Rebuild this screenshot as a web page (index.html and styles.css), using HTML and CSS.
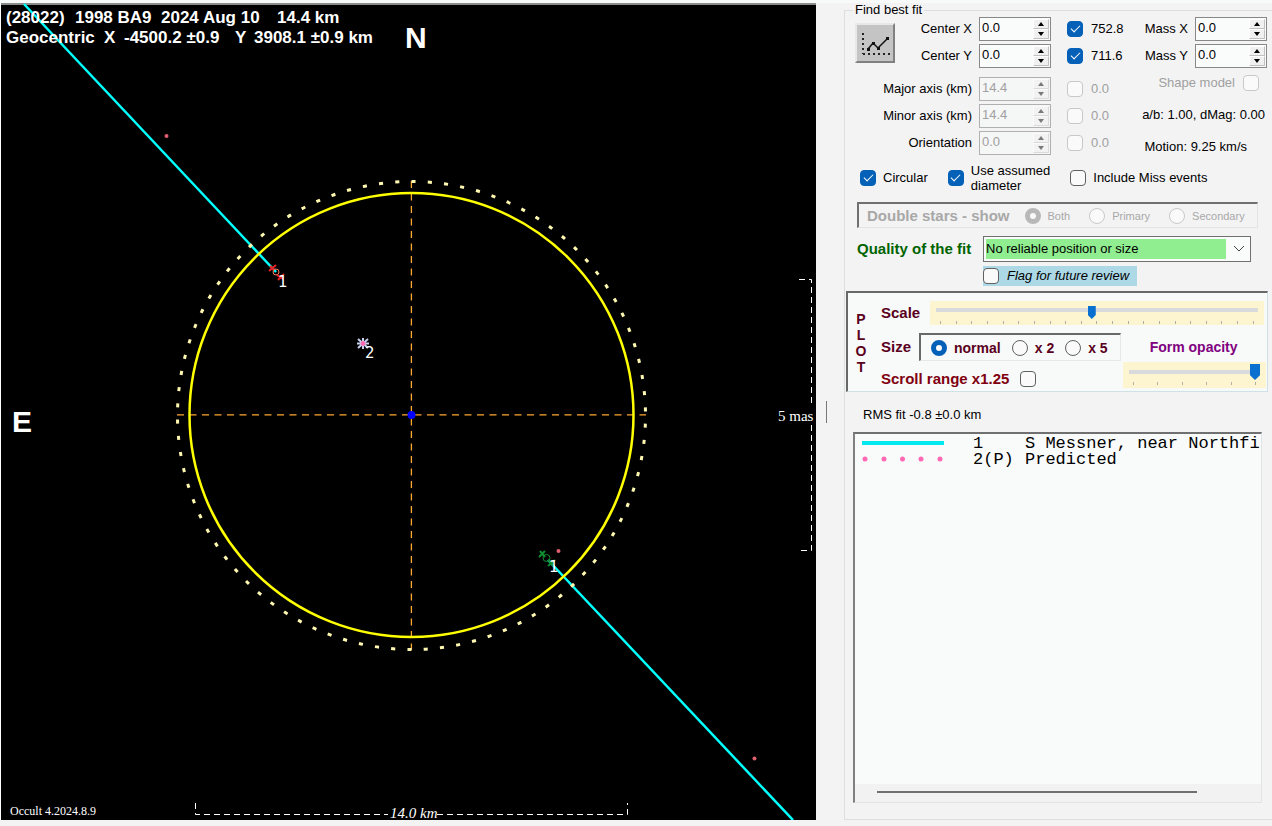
FILE: index.html
```html
<!DOCTYPE html>
<html lang="en">
<head>
<meta charset="utf-8">
<title>Occult - Find best fit</title>
<link rel="stylesheet" href="styles.css">
</head>
<body>
<main class="window">
  <section class="plot">
    <svg class="plot-canvas" viewBox="1 3 815 817" role="img" aria-label="Occultation plot">
      <g class="chord" stroke-width="2.500">
        <path d="M24 4L276 272"/>
        <path d="M548 560L793 820"/>
      </g>
      <g class="crosshair" stroke-width="1.300" stroke-dasharray="7 5.500">
        <path d="M177 414.800H646"/>
        <path d="M411.400 181V650"/>
      </g>
      <circle class="ellipse-error" cx="411.500" cy="415.500" r="234" pathLength="900" stroke-dasharray="2.500 7.500" stroke-dashoffset="-5"/>
      <circle class="ellipse" cx="411.500" cy="415" r="222" stroke-width="2.500"/>
      <circle cx="411.500" cy="415" r="4" fill="#0000ff"/>
      <g fill="#e06070">
        <circle cx="166.500" cy="136" r="2"/>
        <circle cx="558.500" cy="551" r="2"/>
        <circle cx="754.500" cy="758.500" r="2"/>
      </g>
      <g class="event event-d">
        <circle cx="276" cy="272" r="3"/>
        <path d="M269 271l7-6M270 266l4 4M278 280l6-6M277 275l6 4"/>
      </g>
      <g class="event event-r">
        <circle cx="546.500" cy="558" r="3.500"/>
        <path d="M539 557l6-6M540 551l5 6M548 566l7-6M548 560l6 6"/>
      </g>
      <g class="event event-p">
        <path d="M358 339l10 9M358 348l10-9M363 338v11M357 343.500h12"/>
        <circle cx="363" cy="343.500" r="2"/>
      </g>
      <g class="mark">
        <text x="278" y="287">1</text>
        <text x="365" y="358">2</text>
        <text x="549" y="572">1</text>
      </g>
      <g class="scale-bar">
        <path d="M799 279.500H811.500V406"/>
        <path d="M811.500 425V550.500H799"/>
        <path d="M195.500 803V814.500H388"/>
        <path d="M437 814.500H627.500V803"/>
      </g>
      <text class="scale-text" x="778" y="421">5 mas</text>
      <text class="scale-text scale-km" x="390" y="818">14.0 km</text>
      <text class="version" x="10" y="815">Occult 4.2024.8.9</text>
      <g class="title">
        <text x="6" y="23">(28022)</text>
        <text x="75" y="23">1998 BA9</text>
        <text x="161" y="23">2024 Aug 10</text>
        <text x="277" y="23">14.4 km</text>
        <text x="6" y="43">Geocentric</text>
        <text x="104" y="43">X</text>
        <text x="124" y="43">-4500.2 ±0.9</text>
        <text x="235" y="43">Y</text>
        <text x="254" y="43">3908.1 ±0.9 km</text>
      </g>
      <g class="compass">
        <text x="405" y="48">N</text>
        <text x="12" y="432">E</text>
      </g>
    </svg>
  </section>
  <div class="splitter"><span class="splitter-grip"></span></div>
  <fieldset class="panel">
    <legend>Find best fit</legend>

    <div class="fit">
      <button class="graph-button" type="button" aria-label="Plot graph">
        <svg viewBox="0 0 34 34" width="34" height="34">
          <path d="M5 7v21M5 28h27" fill="none" stroke="#222" stroke-width="2" stroke-dasharray="2 3"/>
          <path d="M10 23l5-6 5 5 10-10" fill="none" stroke="#111" stroke-width="1.500"/>
          <path d="M9 22h3v3H9zM14 16h3v3h-3zM19 21h3v3h-3zM28 11h3v3h-3z" fill="#111"/>
        </svg>
      </button>
      <label class="c-label r1" for="cx">Center X</label>
      <div class="spin c-spin r1"><input id="cx" type="text" value="0.0"><span class="arrows"><button type="button" class="up" aria-label="Increase"></button><button type="button" class="down" aria-label="Decrease"></button></span></div>
      <label class="check c-check r1"><input type="checkbox" checked>752.8</label>
      <label class="c-mass r1" for="mx">Mass X</label>
      <div class="spin c-mspin r1"><input id="mx" type="text" value="0.0"><span class="arrows"><button type="button" class="up" aria-label="Increase"></button><button type="button" class="down" aria-label="Decrease"></button></span></div>

      <label class="c-label r2" for="cy">Center Y</label>
      <div class="spin c-spin r2"><input id="cy" type="text" value="0.0"><span class="arrows"><button type="button" class="up" aria-label="Increase"></button><button type="button" class="down" aria-label="Decrease"></button></span></div>
      <label class="check c-check r2"><input type="checkbox" checked>711.6</label>
      <label class="c-mass r2" for="my">Mass Y</label>
      <div class="spin c-mspin r2"><input id="my" type="text" value="0.0"><span class="arrows"><button type="button" class="up" aria-label="Increase"></button><button type="button" class="down" aria-label="Decrease"></button></span></div>

      <label class="c-label r3" for="maj">Major axis (km)</label>
      <div class="spin off c-spin r3"><input id="maj" type="text" value="14.4" disabled><span class="arrows"><button type="button" class="up" aria-label="Increase" disabled></button><button type="button" class="down" aria-label="Decrease" disabled></button></span></div>
      <label class="check off c-check r3"><input type="checkbox" disabled>0.0</label>
      <label class="check off shape r3">Shape model<input type="checkbox" disabled></label>

      <label class="c-label r4" for="min">Minor axis (km)</label>
      <div class="spin off c-spin r4"><input id="min" type="text" value="14.4" disabled><span class="arrows"><button type="button" class="up" aria-label="Increase" disabled></button><button type="button" class="down" aria-label="Decrease" disabled></button></span></div>
      <label class="check off c-check r4"><input type="checkbox" disabled>0.0</label>

      <label class="c-label r5" for="ori">Orientation</label>
      <div class="spin off c-spin r5"><input id="ori" type="text" value="0.0" disabled><span class="arrows"><button type="button" class="up" aria-label="Increase" disabled></button><button type="button" class="down" aria-label="Decrease" disabled></button></span></div>
      <label class="check off c-check r5"><input type="checkbox" disabled>0.0</label>
      <div class="info">
        <span>a/b: 1.00, dMag: 0.00</span>
        <span class="motion">Motion: 9.25 km/s</span>
      </div>
    </div>

    <div class="options">
      <label class="check"><input type="checkbox" checked>Circular</label>
      <label class="check assumed"><input type="checkbox" checked><span>Use assumed<br>diameter</span></label>
      <label class="check"><input type="checkbox">Include Miss events</label>
    </div>

    <div class="double" role="radiogroup" aria-label="Double stars">
      <span class="double-title">Double stars - show</span>
      <label class="radio"><input type="radio" name="double" checked disabled>Both</label>
      <label class="radio"><input type="radio" name="double" disabled>Primary</label>
      <label class="radio"><input type="radio" name="double" disabled>Secondary</label>
    </div>

    <div class="quality">
      <label class="quality-label" for="quality">Quality of the fit</label>
      <div class="select">
        <select id="quality"><option>No reliable position or size</option></select>
        <svg class="chevron" viewBox="0 0 12 8" width="12" height="8"><path d="M1 1l5 5 5-5" fill="none" stroke="#444"/></svg>
      </div>
      <label class="check flag"><input type="checkbox"><em>Flag for future review</em></label>
    </div>

    <section class="plot-box">
      <div class="plot-word"><span>P</span><span>L</span><span>O</span><span>T</span></div>
      <div class="plot-rows">
        <div class="plot-row scale-row">
          <label class="row-label" for="scale">Scale</label>
          <div class="slider">
            <input id="scale" type="range" min="0" max="1000" value="483">
            <div class="ticks"><i></i><i></i><i></i><i></i><i></i><i></i><i></i><i></i><i></i><i></i><i></i><i></i><i></i><i></i><i></i><i></i><i></i><i></i><i></i><i></i><i></i></div>
          </div>
        </div>
        <div class="plot-row size-row">
          <span class="row-label">Size</span>
          <div class="size-group" role="radiogroup" aria-label="Size">
            <label class="radio"><input type="radio" name="size" checked>normal</label>
            <label class="radio"><input type="radio" name="size">x 2</label>
            <label class="radio"><input type="radio" name="size">x 5</label>
          </div>
          <label class="opacity-label" for="opacity">Form opacity</label>
        </div>
        <div class="plot-row scroll-row">
          <label class="check scroll"><span class="row-label">Scroll range x1.25</span><input type="checkbox"></label>
          <div class="slider opacity">
            <input id="opacity" type="range" min="0" max="100" value="100">
            <div class="ticks"><i></i><i></i><i></i><i></i><i></i><i></i></div>
          </div>
        </div>
      </div>
    </section>

    <p class="rms">RMS fit -0.8 ±0.0 km</p>

    <div class="list">
      <ul class="observers">
        <li><svg width="82" height="8" viewBox="0 0 82 8"><path d="M0 3h82" stroke="#00e8f0" stroke-width="4"/></svg><span class="num">1</span><span>S Messner, near Northfi</span></li>
        <li><svg width="82" height="8" viewBox="0 0 82 8"><g fill="#ff69b4"><circle cx="3" cy="3" r="2.500"/><circle cx="22" cy="3" r="2.500"/><circle cx="40.500" cy="3" r="2.500"/><circle cx="59" cy="3" r="2.500"/><circle cx="78" cy="3" r="2.500"/></g></svg><span class="num">2(P)</span><span>Predicted</span></li>
      </ul>
      <div class="scrollbar"><span></span></div>
    </div>
  </fieldset>
</main>
</body>
</html>
```
FILE: styles.css
```css
* { box-sizing: border-box; }

body {
  margin: 0;
  background: #f3f3f4;
  color: #000;
  font: 14px/16px "Liberation Sans", Arial, sans-serif;
}

.window {
  display: grid;
  grid-template-columns: minmax(0, 1fr) 28px 428px;
  border-top: 3px solid #f8faf9;
}

/* Sky-plane plot */
.plot { background: #000; border-left: 1px solid #fff; box-shadow: inset 0 2px #8a8a8a; }
.plot-canvas { display: block; width: 100%; height: auto; font-family: "Liberation Sans", Arial, sans-serif; fill: #fff; }
.chord { stroke: #00ffff; }
.crosshair { stroke: #ffa830; }
.ellipse { fill: none; stroke: #ffff00; }
.ellipse-error { fill: none; stroke: #fff8b0; stroke-width: 3; }
.event { fill: none; stroke-width: 2; }
.event-d { stroke: #e82020; }
.event-r { stroke: #109030; }
.event-p { stroke: #c8d0f0; }
.event-p circle { fill: #ff69b4; stroke: #ff69b4; }
.event circle { stroke-width: 1; }
.event-d circle { stroke: #ff8060; }
.mark { font: 15px "DejaVu Sans", sans-serif; }
.scale-bar { fill: none; stroke: #fff; stroke-width: 1; stroke-dasharray: 6 4; }
.scale-text { font: 15px "Liberation Serif", serif; }
.scale-km { font-style: italic; }
.version { font: 12px "Liberation Serif", serif; }
.title { font-size: 17px; font-weight: bold; }
.compass { font-size: 30px; font-weight: bold; }

.splitter { display: flex; align-items: center; padding-left: 10px; }
.splitter-grip { width: 1px; height: 22px; background: #777; }

/* Side panel */
.panel {
  min-width: 0;
  margin: 0;
  padding: 0;
  border: 1px solid #dcdfe0;
  border-right: 0;
  display: flex;
  flex-direction: column;
  font-size: 14px;
}
.panel legend { margin-left: 8px; padding: 0 2px; line-height: 14px; font-size: 13px; }

input, select, button { font: inherit; color: inherit; margin: 0; padding: 0; }

input[type="checkbox"], input[type="radio"] {
  appearance: none;
  flex: none;
  display: grid;
  place-items: center;
  width: 16px;
  height: 16px;
  border: 1px solid #606060;
  border-radius: 4px;
  background: #fafafa;
}
input[type="radio"] { border-radius: 50%; }
input[type="checkbox"]:checked { background: #0560b8; border-color: #0560b8; }
input[type="checkbox"]:checked::before {
  content: "";
  width: 8px;
  height: 4px;
  margin-bottom: 3px;
  border: solid #fff;
  border-width: 0 0 1px 1px;
  transform: rotate(-45deg);
}
input[type="radio"]:checked { border: 5px solid #0560b8; }
input:disabled { border-color: #c8c8c8; }
input[type="radio"]:checked:disabled { border-color: #b8b8b8; }

.check, .radio { display: flex; align-items: center; gap: 8px; }
.off { color: #a0a0a0; }

.fit {
  display: grid;
  grid-template-columns: 119px 72px 64px 59px 72px;
  grid-template-rows: 24px 24px 30px 24px 24px;
  row-gap: 3px;
  column-gap: 7px;
  align-items: end;
  margin-left: 8px;
  font-size: 13px;
  line-height: 24px;
}
.r1 { grid-row: 1; }
.r2 { grid-row: 2; }
.r3 { grid-row: 3; }
.r4 { grid-row: 4; }
.r5 { grid-row: 5; }
.c-label { grid-column: 1; text-align: right; }
.c-spin { grid-column: 2; }
.c-check { grid-column: 3; margin-left: 9px; }
.c-mass { grid-column: 4; text-align: right; }
.c-mspin { grid-column: 5; }
.shape { grid-column: 4 / 6; align-self: start; justify-content: flex-end; padding-right: 8px; }
.info {
  grid-column: 4 / 6;
  grid-row: 4 / 6;
  display: flex;
  flex-direction: column;
  align-items: flex-end;
  gap: 16px;
  line-height: 16px;
  white-space: nowrap;
  padding-right: 2px;
}
.motion { padding-right: 18px; }

.graph-button {
  grid-column: 1;
  grid-row: 1 / 3;
  align-self: center;
  width: 40px;
  height: 40px;
  margin-left: 2px;
  display: grid;
  place-items: center;
  background: #c4c4c4;
  border: 2px solid;
  border-color: #e8e8e8 #808080 #808080 #e8e8e8;
}

.spin {
  display: flex;
  height: 24px;
  border: 1px solid #888;
  background: #fafbfb;
}
.spin input { width: 50px; min-width: 0; flex: 1; border: 0; padding: 0 2px 3px; background: none; }
.spin.off { border-color: #b0b0b0; background: #f5f6f6; }
.arrows { display: flex; flex-direction: column; width: 17px; padding: 1px 1px 1px 0; }
.arrows button { flex: 1; display: grid; place-items: center; background: #f0f0f0; border: 1px solid #c0c0c0; border-top-color: #fff; border-left-color: #fff; }
.arrows button::before { content: ""; border: 3px solid transparent; }
.arrows .up::before { border-top: 0; border-bottom: 4px solid #000; }
.arrows .down::before { border-bottom: 0; border-top: 4px solid #000; }
.off .arrows { opacity: 0.5; }

.options {
  display: flex;
  align-items: center;
  gap: 20px;
  margin: 8px 0 0 15px;
  font-size: 13px;
}
.options .check { gap: 7px; }
.assumed { line-height: 15px; }

.double {
  display: flex;
  align-items: center;
  gap: 19px;
  height: 26px;
  margin: 9px 14px 0 12px;
  padding-left: 8px;
  border: solid;
  border-width: 2px 1px 1px 2px;
  border-color: #707070 #e4e4e4 #e4e4e4 #707070;
  color: #a8a8a8;
  font-size: 11px;
}
.double-title { font-size: 15px; font-weight: bold; margin-right: -4px; }
.double .radio { gap: 7px; }

.quality {
  display: grid;
  grid-template-columns: 118px minmax(0, 1fr);
  column-gap: 8px;
  row-gap: 4px;
  align-items: center;
  margin: 8px 21px 0 12px;
  font-size: 13px;
}
.quality-label { font-size: 15px; font-weight: bold; color: #006400; }
.select { display: grid; align-items: center; border: 1px solid #707070; background: #fafbfb; height: 26px; }
.select select {
  grid-area: 1 / 1;
  appearance: none;
  height: 20px;
  margin: 0 24px 0 2px;
  border: 0;
  background: #90ee90;
  border-radius: 0;
}
.chevron { grid-area: 1 / 1; justify-self: end; margin-right: 5px; pointer-events: none; }
.flag { grid-column: 2; justify-self: start; height: 20px; padding-right: 8px; background: #add8e6; }

.plot-box {
  display: flex;
  height: 101px;
  margin: 5px 4px 0 1px;
  border: solid;
  border-width: 2px 1px 1px 2px;
  border-color: #686868 #cfe0e6 #cfe0e6 #686868;
  background: #f8faf9;
  color: #5a0020;
  font-weight: bold;
}
.plot-word { display: flex; flex-direction: column; align-items: center; width: 26px; padding-top: 18px; }
.plot-rows { flex: 1; min-width: 0; padding-left: 7px; }
.plot-row { display: flex; align-items: center; }
.row-label { font-size: 15px; }
.scale-row { padding-top: 8px; gap: 10px; padding-right: 3px; }
.slider { flex: 1; height: 24px; padding: 5px 6px 0; background: #fcf5d0; }
.slider input { appearance: none; display: block; width: 100%; height: 13px; background: linear-gradient(#d8dadc, #d8dadc) center 2px / 100% 4px no-repeat; }
.slider input::-webkit-slider-thumb {
  appearance: none;
  width: 8px;
  height: 13px;
  background: #0a70d0;
  clip-path: polygon(0 0, 100% 0, 100% 70%, 50% 100%, 0 70%);
}
.ticks { display: flex; justify-content: space-between; padding: 0 4px; margin-top: 2px; }
.ticks i { width: 1px; height: 3px; background: #b0b0a8; }
.size-row { margin-top: 8px; gap: 8px; }
.size-group {
  display: flex;
  align-items: center;
  gap: 11px;
  height: 28px;
  padding: 0 12px 0 10px;
  border: solid;
  border-width: 2px 1px 1px 2px;
  border-color: #686868 #e4e8e8 #e4e8e8 #686868;
}
.size-group .radio { gap: 7px; }
.opacity-label { color: #800080; margin-left: 21px; }
.scroll-row { justify-content: space-between; padding-right: 1px; margin-top: 1px; }
.scroll { color: #800010; padding-top: 7px; gap: 11px; }
.slider.opacity { flex: none; width: 143px; height: 26px; padding-top: 2px; }
.slider.opacity input { height: 16px; background-position: center 6px; }
.slider.opacity input::-webkit-slider-thumb { width: 10px; height: 16px; }

.rms { margin: 15px 0 0 18px; font-size: 13px; }

.list {
  flex: 1;
  display: flex;
  flex-direction: column;
  margin: 9px 10px 16px 8px;
  border: solid;
  border-width: 2px 1px 1px 2px;
  border-color: #707070 #e0e4e4 #e0e4e4 #808080;
  background: #f9fafa;
  overflow: hidden;
}
.observers { flex: 1; margin: 0; padding: 2px 0 0 7px; list-style: none; font: 17px/16px "Liberation Mono", monospace; }
.observers li { display: flex; align-items: center; white-space: nowrap; }
.num { width: 52px; margin-left: 29px; }
.scrollbar { height: 18px; padding: 7px 64px 0 22px; background: #f2f2f3; }
.scrollbar span { display: block; height: 2px; background: #707070; }
```
